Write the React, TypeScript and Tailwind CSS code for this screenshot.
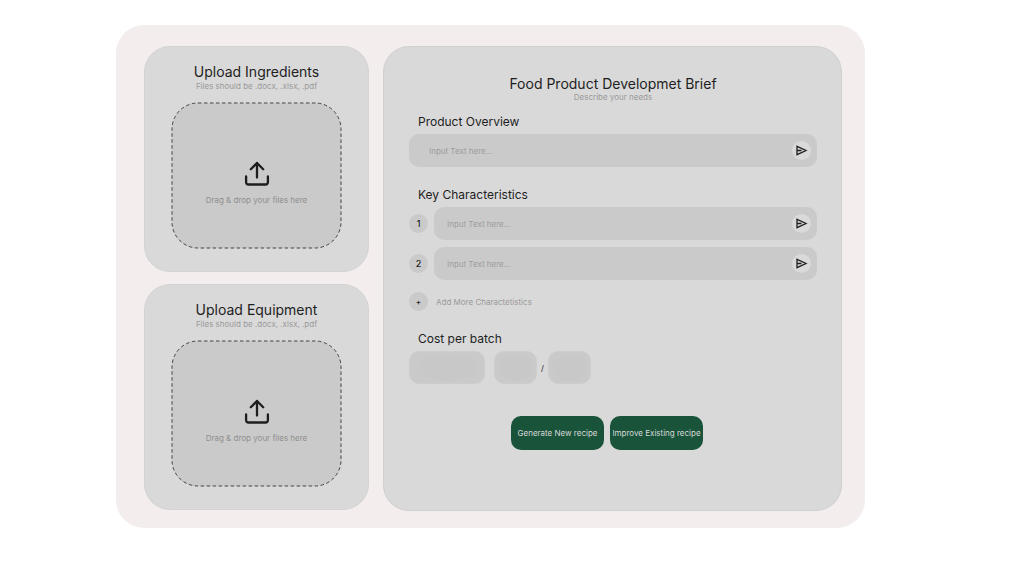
import { useState } from "react";

const uploads = [
  { id: "ingredients", title: "Upload Ingredients" },
  { id: "equipment", title: "Upload Equipment" },
];

const costFieldClass =
  "h-[33px] rounded-[10px] border border-[#cdcdcd] bg-radial from-[#c8c8c8] from-50% to-[#cacaca] to-70% px-2 text-[8px] text-[#1e1e1e] outline-none";

export default function App() {
  const [characteristics, setCharacteristics] = useState(["", ""]);

  return (
    <div className="pt-[25px] pr-[159px] pb-12 pl-[116px] font-['Inter','Liberation_Sans',sans-serif] text-[#1e1e1e]">
      <main className="flex gap-[14px] rounded-[28px] bg-[#f3eded] pt-[21px] pr-[23px] pb-[17px] pl-7">
        <div className="flex w-[225px] shrink-0 flex-col gap-3">
          {uploads.map((upload) => (
            <UploadCard key={upload.id} id={upload.id} title={upload.title} />
          ))}
        </div>

        <form
          className="flex-1 rounded-[26px] border border-[#d0d0d0] bg-[#d9d9d9] pt-7 pr-6 pb-[60px] pl-[25px]"
          onSubmit={(e) => e.preventDefault()}
        >
          <h1 className="text-center text-[14px] leading-[18px]">
            Food Product Developmet Brief
          </h1>
          <p className="text-center text-[8px] leading-2 text-[#999999]">
            Describe your needs
          </p>

          <section className="mt-[13px]">
            <SectionTitle htmlFor="overview">Product Overview</SectionTitle>
            <div className="flex">
              <TextField id="overview" label="Product Overview" wide />
            </div>
          </section>

          <section className="mt-5">
            <SectionTitle htmlFor="characteristic-1">
              Key Characteristics
            </SectionTitle>
            <div className="flex flex-col gap-[7px]">
              {characteristics.map((_, index) => (
                <div key={index} className="flex items-center gap-[6px]">
                  <span className="flex size-[19px] items-center justify-center rounded-full bg-[#cacaca] text-[9px] font-medium">
                    {index + 1}
                  </span>
                  <TextField
                    id={`characteristic-${index + 1}`}
                    label={`Characteristic ${index + 1}`}
                  />
                </div>
              ))}
            </div>
            <button
              type="button"
              className="mt-3 flex items-center gap-2 text-[8px] text-[#999999]"
              onClick={() => setCharacteristics([...characteristics, ""])}
            >
              <span className="flex size-[19px] items-center justify-center rounded-full bg-[#cacaca] font-medium text-[#1e1e1e]">
                +
              </span>
              Add More Charactetistics
            </button>
          </section>

          <section className="mt-5">
            <SectionTitle htmlFor="cost">Cost per batch</SectionTitle>
            <div className="flex items-center">
              <input id="cost" className={`w-[76px] ${costFieldClass}`} />
              <input
                aria-label="Currency"
                className={`ml-[9px] w-[43px] ${costFieldClass}`}
              />
              <span className="w-[11px] text-center text-[8px]">/</span>
              <input
                aria-label="Unit"
                className={`w-[43px] ${costFieldClass}`}
              />
            </div>
          </section>

          <div className="mt-8 flex justify-center gap-[6px] pr-3">
            <ActionButton>Generate New recipe</ActionButton>
            <ActionButton>Improve Existing recipe</ActionButton>
          </div>
        </form>
      </main>
    </div>
  );
}

function UploadCard({ id, title }: { id: string; title: string }) {
  return (
    <section className="rounded-[26px] border border-[#d3d3d3] bg-[#d9d9d9] px-[27px] pt-[15px] pb-[23px]">
      <h2 className="text-center text-[14px] leading-[19px]">{title}</h2>
      <p className="text-center text-[8px] leading-[10px] text-[#999999]">
        Files should be .docx, .xlsx, .pdf
      </p>
      <label
        htmlFor={id}
        className="relative mt-3 flex h-[145px] cursor-pointer flex-col items-center justify-center gap-2 rounded-[26px] bg-[#cacaca] pt-[14px]"
      >
        {/* dashed outline */}
        <svg
          className="absolute inset-0 size-full overflow-visible"
          fill="none"
          stroke="#444444"
          aria-hidden="true"
        >
          <rect width="100%" height="100%" rx="26" strokeDasharray="3.5 2.5" />
        </svg>
        <svg
          className="size-[26px]"
          viewBox="0 0 26 26"
          fill="none"
          stroke="currentColor"
          strokeWidth="2.3"
          strokeLinecap="round"
          strokeLinejoin="round"
          aria-hidden="true"
        >
          <path d="M2.1 15.5v5.8a2.2 2.2 0 0 0 2.2 2.2h17.4a2.2 2.2 0 0 0 2.2-2.2v-5.8" />
          <path d="M13 16.5V2M6.8 8.2 13 2l6.2 6.2" />
        </svg>
        <span className="text-[8px] leading-[10px] text-[#8f8f8f]">
          Drag &amp; drop your files here
        </span>
        <input
          id={id}
          type="file"
          accept=".docx,.xlsx,.pdf"
          className="sr-only"
        />
      </label>
    </section>
  );
}

function SectionTitle({
  htmlFor,
  children,
}: {
  htmlFor: string;
  children: string;
}) {
  return (
    <h2 className="mb-1 pl-[9px] text-[12px] leading-4">
      <label htmlFor={htmlFor}>{children}</label>
    </h2>
  );
}

function TextField({
  id,
  label,
  wide,
}: {
  id: string;
  label: string;
  wide?: boolean;
}) {
  return (
    <div
      className={`flex h-[33px] flex-1 items-center rounded-[10px] bg-[#cacaca] pr-[6px] ${
        wide ? "pl-5" : "pl-[13px]"
      }`}
    >
      <input
        id={id}
        aria-label={label}
        placeholder="Input Text here..."
        className="min-w-0 flex-1 bg-transparent text-[8px] outline-none placeholder:text-[#9d9d9d]"
      />
      <button
        type="button"
        aria-label="Send"
        className="flex size-[19px] items-center justify-center rounded-full bg-[#d9d9d9]"
      >
        <svg
          className="size-[13px]"
          viewBox="0 0 13 13"
          fill="none"
          stroke="currentColor"
          strokeWidth="1.3"
          aria-hidden="true"
        >
          <path d="M2 2.3 11 6.5 2 10.7zM2 6.5h4.5" />
        </svg>
      </button>
    </div>
  );
}

function ActionButton({ children }: { children: string }) {
  return (
    <button
      type="submit"
      className="h-[34px] w-[93px] rounded-[10px] bg-[#18533a] text-[8px] whitespace-nowrap text-[#d9d9d9]"
    >
      {children}
    </button>
  );
}
